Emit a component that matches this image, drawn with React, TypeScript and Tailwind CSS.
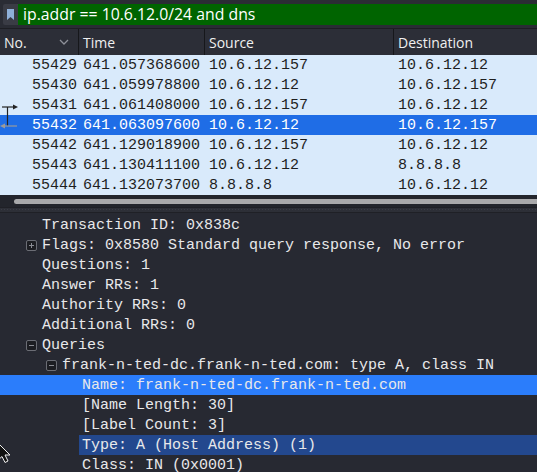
import React from "react";

const rows = [
  { no: "55429", time: "641.057368600", src: "10.6.12.157", dst: "10.6.12.12" },
  { no: "55430", time: "641.059978800", src: "10.6.12.12", dst: "10.6.12.157" },
  { no: "55431", time: "641.061408000", src: "10.6.12.157", dst: "10.6.12.12" },
  { no: "55432", time: "641.063097600", src: "10.6.12.12", dst: "10.6.12.157", sel: true },
  { no: "55442", time: "641.129018900", src: "10.6.12.157", dst: "10.6.12.12" },
  { no: "55443", time: "641.130411100", src: "10.6.12.12", dst: "8.8.8.8" },
  { no: "55444", time: "641.132073700", src: "8.8.8.8", dst: "10.6.12.12" },
];

type Detail = { text: string; level: number; box?: "+" | "-"; hl?: "bright" | "dark" };

const details: Detail[] = [
  { text: "Transaction ID: 0x838c", level: 0 },
  { text: "Flags: 0x8580 Standard query response, No error", level: 0, box: "+" },
  { text: "Questions: 1", level: 0 },
  { text: "Answer RRs: 1", level: 0 },
  { text: "Authority RRs: 0", level: 0 },
  { text: "Additional RRs: 0", level: 0 },
  { text: "Queries", level: 0, box: "-" },
  { text: "frank-n-ted-dc.frank-n-ted.com: type A, class IN", level: 1, box: "-" },
  { text: "Name: frank-n-ted-dc.frank-n-ted.com", level: 2, hl: "bright" },
  { text: "[Name Length: 30]", level: 2 },
  { text: "[Label Count: 3]", level: 2 },
  { text: "Type: A (Host Address) (1)", level: 2, hl: "dark" },
  { text: "Class: IN (0x0001)", level: 2 },
];

const mono = { fontFamily: '"Liberation Mono", monospace' };
const sans = { fontFamily: '"Open Sans", sans-serif' };

function Box({ kind }: { kind: "+" | "-" }) {
  return (
    <svg width="11" height="11" viewBox="0 0 11 11" className="shrink-0">
      <rect x="0.5" y="0.5" width="10" height="10" rx="1.5" fill="#1c1d22" stroke="#6b6d75" />
      <line x1="3" y1="5.5" x2="8" y2="5.5" stroke="#8a8c94" />
      {kind === "+" && <line x1="5.5" y1="3" x2="5.5" y2="8" stroke="#8a8c94" />}
    </svg>
  );
}

export default function App() {
  return (
    <div className="w-[537px] h-[472px] overflow-hidden bg-[#272932] relative flex flex-col" style={sans}>
      {/* filter bar */}
      <div className="h-[28px] shrink-0 bg-[#2a2c34] flex items-center pl-[3px] pt-[1px]">
        <div className="h-[21px] w-[15px] bg-[#3a3c45] flex items-center justify-center rounded-l-[2px]">
          <svg width="7" height="11" viewBox="0 0 7 11">
            <path d="M0 0 H7 V11 L3.5 8 L0 11 Z" fill="#8fb0d8" />
          </svg>
        </div>
        <div className="h-[21px] flex-1 bg-[#006400] flex items-center pl-[5px] text-[15.8px] leading-none text-white">
          ip.addr == 10.6.12.0/24 and dns
        </div>
      </div>
      {/* header */}
      <div className="h-[27px] shrink-0 bg-[#2c2e37] border-t border-[#1d1e23] flex text-[14px] text-[#f0f0f0]">
        <div className="w-[79px] flex items-center justify-between pl-[4px] pr-[9px] border-r border-[#16171b]">
          <span>No.</span>
          <svg width="10" height="6" viewBox="0 0 10 6">
            <path d="M1 1 L5 5 L9 1" fill="none" stroke="#8e9099" strokeWidth="1.3" />
          </svg>
        </div>
        <div className="w-[126px] flex items-center pl-[4px] border-r border-[#16171b]">Time</div>
        <div className="w-[189px] flex items-center pl-[4px] border-r border-[#16171b]">Source</div>
        <div className="flex-1 flex items-center pl-[4px]">Destination</div>
      </div>
      {/* packet list */}
      <div className="relative shrink-0 bg-[#d9eafb] text-[15px]" style={mono}>
        {rows.map((r) => (
          <div
            key={r.no}
            className={`h-[20px] flex items-center leading-none ${r.sel ? "bg-[#1f6de6] text-white" : "text-[#1e1e1e]"}`}
          >
            <div className="w-[79px] text-right pr-[2px]">{r.no}</div>
            <div className="w-[126px] pl-[4px]">{r.time}</div>
            <div className="w-[189px] pl-[4px]">{r.src}</div>
            <div className="flex-1 pl-[4px]">{r.dst}</div>
          </div>
        ))}
        <svg className="absolute left-0 top-[40px]" width="20" height="40" viewBox="0 0 20 40">
          <line x1="2" y1="12" x2="15" y2="12" stroke="#222" strokeWidth="1.2" />
          <path d="M13 9.5 L18 12 L13 14.5 Z" fill="#222" />
          <line x1="7.5" y1="12" x2="7.5" y2="31" stroke="#222" strokeWidth="1.2" />
          <line x1="3" y1="31" x2="17" y2="31" stroke="#9a9a9a" strokeWidth="1.2" />
          <path d="M5 28.5 L0 31 L5 33.5 Z" fill="#9a9a9a" />
        </svg>
      </div>
      {/* horizontal scrollbar */}
      <div className="h-[12px] shrink-0 bg-[#23252c] flex items-center pl-[14px]">
        <div className="h-[5px] flex-1 bg-[#a9a9ab] rounded-l-[3px]" />
      </div>
      {/* splitter */}
      <div
        className="h-[6px] shrink-0 bg-[#2d2f37] border-t border-b border-[#1f2026]"
        style={{ backgroundImage: "radial-gradient(#3a3c45 0.6px, transparent 0.7px)", backgroundSize: "3px 3px" }}
      />
      {/* details */}
      <div className="shrink-0 pt-[2px] text-[15px] text-[#e8e8ea]" style={mono}>
        {details.map((d, i) => {
          const left = 42 + d.level * 20;
          return (
            <div key={i} className="h-[20px] flex items-center leading-none relative">
              {d.hl === "bright" && <div className="absolute inset-0 bg-[#2b7dfb]" />}
              {d.hl === "dark" && <div className="absolute top-0 bottom-0 left-[79px] right-0 bg-[#23488e]" />}
              {d.box && (
                <div className="absolute top-[5px]" style={{ left: left - 16 }}>
                  <Box kind={d.box} />
                </div>
              )}
              <span className="relative whitespace-pre" style={{ paddingLeft: left }}>
                {d.text}
              </span>
            </div>
          );
        })}
      </div>
      {/* mouse cursor */}
      <svg className="absolute left-0 top-[440px]" width="14" height="24" viewBox="0 0 14 24">
        <path d="M-3 2 L10 15 L5 15 L8 21 L5 22.5 L2 16.5 L-3 21 Z" fill="#111" stroke="#eee" strokeWidth="1" />
      </svg>
    </div>
  );
}
